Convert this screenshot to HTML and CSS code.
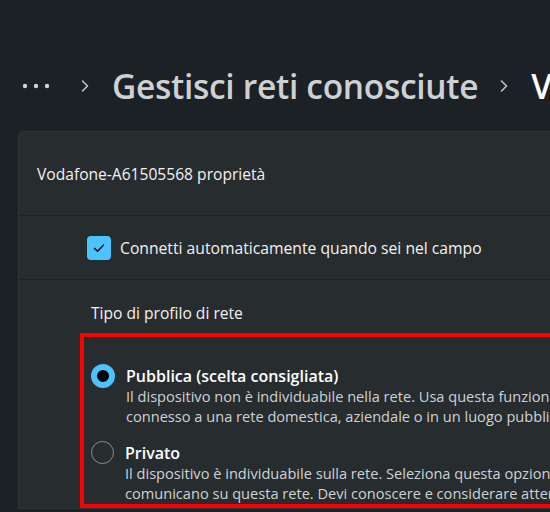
FILE: index.html
```html
<!DOCTYPE html>
<html lang="it">
<head>
<meta charset="utf-8">
<title>Gestisci reti conosciute</title>
<link rel="stylesheet" href="styles.css">
</head>
<body>
<div class="page">
  <div class="breadcrumb">
    <span class="more">
      <svg width="30" height="6" viewBox="0 0 30 6"><circle cx="3" cy="3" r="2.2" fill="#cfd3d6"/><circle cx="14" cy="3" r="2.2" fill="#cfd3d6"/><circle cx="25" cy="3" r="2.2" fill="#cfd3d6"/></svg>
    </span>
    <span class="chev"><svg width="10" height="14" viewBox="0 0 10 14"><path d="M2.5 2 L7.5 7 L2.5 12" fill="none" stroke="#bfc3c6" stroke-width="1.6" stroke-linecap="round" stroke-linejoin="round"/></svg></span>
    <span class="crumb">Gestisci reti conosciute</span>
    <span class="chev chev2"><svg width="10" height="14" viewBox="0 0 10 14"><path d="M2.5 2 L7.5 7 L2.5 12" fill="none" stroke="#bfc3c6" stroke-width="1.6" stroke-linecap="round" stroke-linejoin="round"/></svg></span>
    <span class="crumb current">Vodafone-A61505568</span>
  </div>

  <div class="card">
    <div class="card-header">Vodafone-A61505568 proprietà</div>
    <div class="row-check">
      <span class="checkbox"><svg width="14" height="14" viewBox="0 0 14 14"><path d="M2.5 7.4 L5.6 10.3 L11.5 4" fill="none" stroke="#111" stroke-width="1.5" stroke-linecap="round" stroke-linejoin="round"/></svg></span>
      <span class="check-label">Connetti automaticamente quando sei nel campo</span>
    </div>
    <div class="section">
      <div class="section-title">Tipo di profilo di rete</div>
      <div class="options">
        <div class="option">
          <span class="radio radio-on"></span>
          <div class="option-text">
            <div class="option-title">Pubblica (scelta consigliata)</div>
            <div class="option-desc">Il dispositivo non è individuabile nella rete. Usa questa funzionalità nella maggior parte dei casi, quando sei</div>
            <div class="option-desc">connesso a una rete domestica, aziendale o in un luogo pubblico.</div>
          </div>
        </div>
        <div class="option">
          <span class="radio"></span>
          <div class="option-text">
            <div class="option-title">Privato</div>
            <div class="option-desc">Il dispositivo è individuabile sulla rete. Seleziona questa opzione se devi condividere file o usare app che</div>
            <div class="option-desc">comunicano su questa rete. Devi conoscere e considerare attendibili le persone e i dispositivi in rete.</div>
          </div>
        </div>
      </div>
    </div>
  </div>
</div>
</body>
</html>
```

FILE: styles.css
```css
html, body {
  margin: 0;
  padding: 0;
  background: #1c2125;
  overflow: hidden;
}
body {
  width: 550px;
  height: 512px;
  font-family: "Open Sans", "Noto Sans", sans-serif;
  color: #ffffff;
}
.page {
  width: 1000px;
}
.breadcrumb {
  display: flex;
  align-items: center;
  height: 56px;
  margin-top: 58px;
  padding-left: 22px;
  white-space: nowrap;
}
.more {
  display: flex;
  width: 30px;
}
.chev {
  display: flex;
  margin-left: 28px;
  margin-right: 22px;
}
.chev2 {
  margin-left: 21px;
  margin-right: 22px;
}
.crumb {
  font-size: 33.5px;
  font-weight: 600;
  color: #cdd1d4;
  letter-spacing: -0.3px;
}
.crumb.current {
  color: #ffffff;
}
.card {
  margin-left: 18px;
  margin-top: 17px;
  width: 960px;
  background: #272c2f;
  border: 1px solid #30353a;
  border-radius: 5px 0 0 0;
}
.card-header {
  height: 83px;
  display: flex;
  align-items: center;
  padding-left: 18px;
  font-size: 15.6px;
  color: #f2f2f2;
}
.row-check {
  height: 63px;
  border-top: 1px solid #1e2226;
  display: flex;
  align-items: center;
  padding-left: 68px;
}
.checkbox {
  width: 24px;
  height: 24px;
  border-radius: 4px;
  background: #4cc2ff;
  display: flex;
  align-items: center;
  justify-content: center;
  margin-right: 9px;
}
.check-label {
  font-size: 15.7px;
  color: #f2f2f2;
}
.section {
  border-top: 1px solid #1e2226;
  padding-left: 61px;
}
.section-title {
  font-size: 15.6px;
  color: #f2f2f2;
  padding-top: 22px;
  padding-left: 11px;
  height: 30px;
}
.options {
  border: 4px solid #ff0000;
  border-right: none;
  margin-top: 1px;
  padding: 29px 0 0 7px;
  height: 138px;
  white-space: nowrap;
}
.option {
  display: flex;
  align-items: flex-start;
  margin-bottom: 17px;
}
.radio {
  width: 21px;
  height: 21px;
  border-radius: 50%;
  border: 1.5px solid #8b8f92;
  margin-top: -2px;
  margin-right: 11px;
  flex: none;
}
.radio-on {
  width: 12px;
  height: 12px;
  border: 6px solid #4cc2ff;
  background: #000000;
}
.option-title {
  font-size: 16px;
  font-weight: 600;
  color: #ffffff;
  line-height: 20px;
}
.option-desc {
  font-size: 14.6px;
  color: #cfd2d4;
  line-height: 20px;
}
```
